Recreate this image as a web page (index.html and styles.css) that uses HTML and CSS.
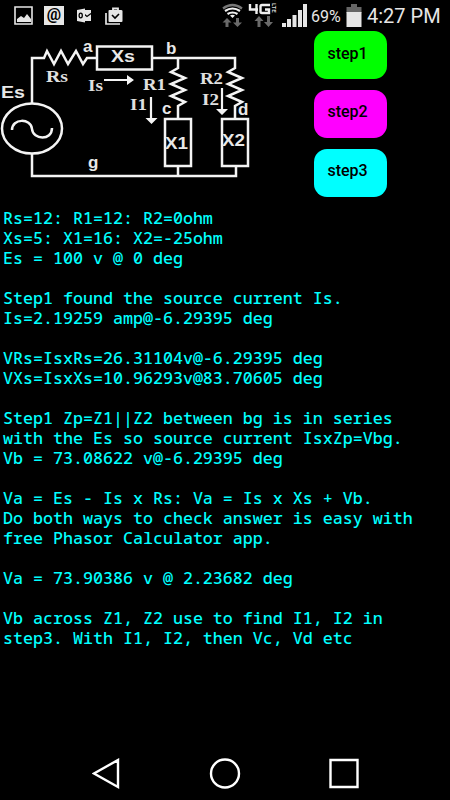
FILE: index.html
```
<!DOCTYPE html>
<html lang="en">
<head>
    <meta charset="UTF-8">
    <meta name="viewport" content="width=device-width, initial-scale=1.0">
    <title>Phasor Calculator</title>
    <link rel="stylesheet" href="styles.css">
</head>
<body>
    <header class="status-bar">
        <svg class="notifications" width="130" height="31" viewBox="0 0 130 31">
            <path d="M15 7h17v17H15z" fill="none" stroke="#e6e6e6" stroke-width="1.6"/>
            <path d="M17 22v-3l4-3 3 2 3-4 4 5v3z" fill="#e6e6e6"/>
            <path d="M44 6h20v19H44z" fill="#e6e6e6"/>
            <text x="54" y="20" text-anchor="middle" font-size="16" font-weight="bold" fill="#000">@</text>
            <path d="M83 10h8v11h-8z" fill="#e6e6e6"/>
            <path d="M84 14l3 2.500 4-3" fill="none" stroke="#000" stroke-width="1.300"/>
            <path d="M77 10l8-1.500v14L77 21z" fill="#e6e6e6"/>
            <ellipse cx="80.700" cy="15.500" rx="1.600" ry="2.300" fill="none" stroke="#000" stroke-width="1.300"/>
            <path d="M106 13v11h14" fill="none" stroke="#e6e6e6" stroke-width="1.700"/>
            <path d="M108.500 11q0-1 1-1H121q1.500 0 1.500 1v10q0 1-1 1h-12q-1 0-1-1z" fill="#e6e6e6"/>
            <path d="M113 10V8.500h5V10" fill="none" stroke="#e6e6e6" stroke-width="1.800"/>
            <path d="M112 15l3 3 4-4" fill="none" stroke="#000" stroke-width="1.600"/>
        </svg>
        <svg class="signals" width="100" height="31" viewBox="0 0 100 31">
            <g fill="none" stroke-width="2.200">
                <path d="M13 8.500q9.500-7 19 0" stroke="#777"/>
                <path d="M15 11q7.500-5 15 0M17.500 14q5-3 10 0" stroke="#f0f0f0"/>
            </g>
            <path d="M20 15.500q2.500-1.500 5 0l-2.500 2.500z" fill="#f0f0f0"/>
            <path d="M17 18l4.500 4.500h-3V27h-3v-4.500h-3zM27.500 27L23 22.500h3V18h3v4.500h3zM49 16l4.500 5h-3v6h-3v-6h-3zM58.500 27L54 22h3v-6h3v6h3z" fill="#6a6a6a"/>
            <path d="M40 4v5.500h8M46.500 4v10M60 5H52q-1.500 0-1.500 1.500v5q0 1.500 1.500 1.500h7V9.500h-4" fill="none" stroke="#f0f0f0" stroke-width="2.400"/>
            <text x="62" y="3" transform="rotate(90 62 3)" font-size="6" font-weight="bold" fill="#ddd">LTE</text>
            <path d="M72 23h4v4h-4zM77 19h4v8h-4zM82.500 15h4v12h-4zM88 10h4v17h-4zM93 4h4v23h-4z" fill="#e6e6e6"/>
        </svg>
        <span class="battery-level">69%</span>
        <svg class="battery" width="17" height="31" viewBox="0 0 17 31">
            <path d="M5 4h6v3h4.500v6H.5V7H5z" fill="#666"/>
            <path d="M.5 12h15v15H.5z" fill="#e6e6e6"/>
        </svg>
        <span class="time">4:27 PM</span>
    </header>

    <main class="top">
        <svg class="circuit" width="252" height="155" viewBox="0 31 252 155">
            <g fill="none" stroke="#f4f4f4" stroke-width="2.500">
                <path d="M32 103V58h12l3-7 7 13 7-13 7 13 8-13 7 13 4-6h10"/>
                <path d="M97 46.500h55v23H97z"/>
                <path d="M152 58h83v10l-7 4 14 6-14 6 14 6-14 6 14 6-7 4v13"/>
                <path d="M178 58v10l-7 4 14 6-14 6 14 6-14 6 14 6-7 4v13"/>
                <path d="M165 119h26v47h-26zM222 119h26v47h-26z"/>
                <path d="M32 154v22h204v-10M178 166v10"/>
                <ellipse cx="32" cy="128.500" rx="30" ry="25"/>
                <path d="M12 130c0-12 19-12 20-1s20 12 20-1"/>
            </g>
            <path d="M104 80h26M151 97v24M222 88v23" stroke="#f4f4f4" stroke-width="2.200"/>
            <path d="M127 75l7 5-7 5zM145.500 118h12l-6 6zM216 109h12l-6 6z" fill="#f4f4f4"/>
            <g class="node">
                <text x="83" y="51.500">a</text>
                <text x="166" y="54">b</text>
                <text x="88" y="168">g</text>
                <text x="162" y="114">c</text>
                <text x="238" y="115">d</text>
                <text x="1" y="98" textLength="24" lengthAdjust="spacingAndGlyphs">Es</text>
                <text x="111" y="62" textLength="24" lengthAdjust="spacingAndGlyphs">Xs</text>
                <text x="165" y="149" textLength="23" lengthAdjust="spacingAndGlyphs">X1</text>
                <text x="222" y="146" textLength="23" lengthAdjust="spacingAndGlyphs">X2</text>
            </g>
            <g class="value">
                <text x="46" y="81.500" textLength="22" lengthAdjust="spacingAndGlyphs">Rs</text>
                <text x="88" y="91" textLength="15" lengthAdjust="spacingAndGlyphs">Is</text>
                <text x="143" y="90" textLength="23" lengthAdjust="spacingAndGlyphs">R1</text>
                <text x="200" y="84" textLength="23" lengthAdjust="spacingAndGlyphs">R2</text>
                <text x="130" y="110" textLength="17" lengthAdjust="spacingAndGlyphs">I1</text>
                <text x="202" y="105" textLength="17" lengthAdjust="spacingAndGlyphs">I2</text>
            </g>
        </svg>
        <div class="buttons">
            <button class="step1">step1</button>
            <button class="step2">step2</button>
            <button class="step3">step3</button>
        </div>
    </main>

    <pre class="results">
Rs=12: R1=12: R2=0ohm
Xs=5: X1=16: X2=-25ohm
Es = 100 v @ 0 deg

Step1 found the source current Is.
Is=2.19259 amp@-6.29395 deg

VRs=IsxRs=26.31104v@-6.29395 deg
VXs=IsxXs=10.96293v@83.70605 deg

Step1 Zp=Z1||Z2 between bg is in series
with the Es so source current IsxZp=Vbg.
Vb = 73.08622 v@-6.29395 deg

Va = Es - Is x Rs: Va = Is x Xs + Vb.
Do both ways to check answer is easy with
free Phasor Calculator app.

Va = 73.90386 v @ 2.23682 deg

Vb across Z1, Z2 use to find I1, I2 in
step3. With I1, I2, then Vc, Vd etc</pre>

    <nav class="nav-bar">
        <svg width="30" height="32" viewBox="0 0 30 32"><path d="M26 2v27L2 15.500z"/></svg>
        <svg width="32" height="32" viewBox="0 0 32 32"><circle cx="16" cy="15.500" r="14"/></svg>
        <svg width="32" height="32" viewBox="0 0 32 32"><path d="M2.500 2h27v27h-27z"/></svg>
    </nav>
</body>
</html>
```
FILE: styles.css
```
body {
    background-color: #000;
    color: #fff;
    font-family: Roboto, sans-serif;
    margin: 0;
    height: 800px;
    display: flex;
    flex-direction: column;
    overflow: hidden;
}
.status-bar {
    height: 31px;
    display: flex;
    align-items: center;
    color: #e6e6e6;
}
.signals {
    margin-left: 80px;
}
.battery-level {
    width: 35px;
    margin-left: 1px;
    font-size: 16px;
    line-height: 31px;
    padding-top: 1px;
}
.time {
    margin-left: 4px;
    font-size: 20px;
    line-height: 31px;
    padding-top: 2px;
    white-space: nowrap;
}
.top {
    display: flex;
    height: 177px;
}
.node {
    font: bold 17px "Liberation Sans", sans-serif;
    fill: #e8e8e8;
}
.value {
    font: bold 17px "Liberation Serif", serif;
    fill: #e0e0e0;
}
.buttons {
    display: flex;
    flex-direction: column;
    gap: 10.8px;
    margin-left: 61.5px;
}
.buttons button {
    width: 73px;
    height: 48px;
    padding: 0 5px 4px 0;
    border: none;
    border-radius: 13px;
    color: #000;
    font: 500 16px Roboto, sans-serif;
}
.buttons .step1 {
    background-color: #00ff00;
}
.buttons .step2 {
    background-color: #ff00ff;
}
.buttons .step3 {
    background-color: #00ffff;
}
.results {
    margin: 0;
    padding-left: 3px;
    color: #00ffff;
    font-family: "Droid Sans Mono", "Noto Sans Mono", "DejaVu Sans Mono", monospace;
    font-size: 16.67px;
    font-weight: 500;
    line-height: 20px;
}
.nav-bar {
    display: flex;
    justify-content: space-between;
    margin-top: auto;
    padding: 0 90px 10px 92px;
}
.nav-bar svg {
    fill: none;
    stroke: #fff;
    stroke-width: 2.4;
}
```
